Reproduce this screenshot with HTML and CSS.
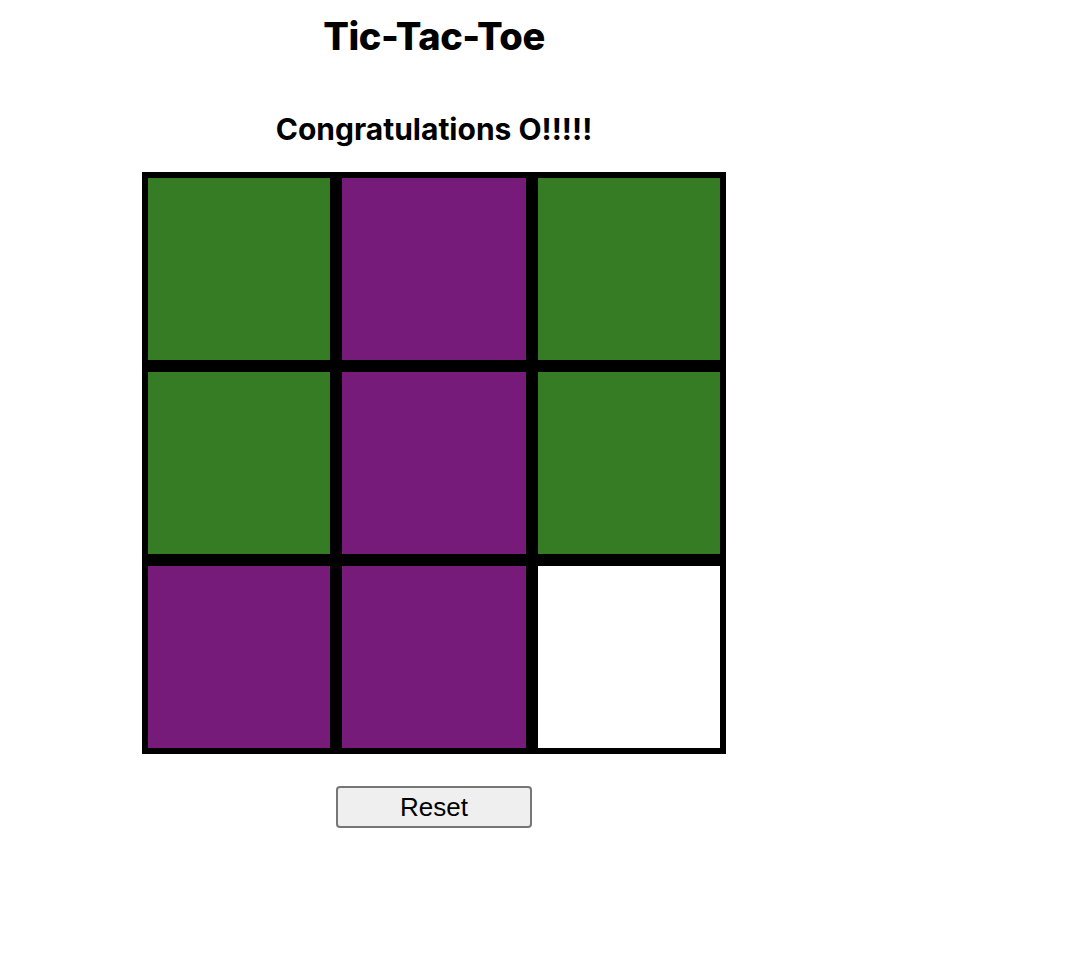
FILE: index.html
```html
<!DOCTYPE html>
<html>
<head>
<meta charset="utf-8">
<link rel="stylesheet" href="styles.css">
</head>
<body>
<div class="game">
  <h1 class="title">Tic-Tac-Toe</h1>
  <h2 class="status">Congratulations O!!!!!</h2>
  <div class="board">
    <div class="cell x"></div>
    <div class="cell o"></div>
    <div class="cell x"></div>
    <div class="cell x"></div>
    <div class="cell o"></div>
    <div class="cell x"></div>
    <div class="cell o"></div>
    <div class="cell o"></div>
    <div class="cell empty"></div>
  </div>
  <div class="controls">
    <button class="reset">Reset</button>
  </div>
</div>
</body>
</html>
```
FILE: styles.css
```css
html, body {
  margin: 0;
  padding: 0;
  background: #ffffff;
}
body {
  padding: 8px;
  font-family: Inter, "Liberation Sans", sans-serif;
  color: #000;
}
.game {
  width: 584px;
  margin-left: 134px;
  display: flex;
  flex-direction: column;
  align-items: center;
}
.title {
  margin: 6px 0 0 0;
  font-size: 38px;
  font-weight: 800;
  line-height: 44px;
  letter-spacing: -0.4px;
}
.status {
  margin: 53px 0 0 0;
  font-size: 30px;
  font-weight: 700;
  line-height: 36px;
  letter-spacing: 0;
}
.board {
  margin-top: 25px;
  align-self: stretch;
  display: grid;
  grid-template-columns: 182px 184px 182px;
  grid-template-rows: 182px 182px 182px;
  gap: 12px;
  border: 6px solid #000;
  background: #000;
}
.cell.x { background: #357c24; }
.cell.o { background: #761b79; }
.cell.empty { background: #ffffff; }
.controls {
  margin-top: 32px;
}
.reset {
  width: 196px;
  height: 42px;
  font-family: "Liberation Sans", Arial, sans-serif;
  font-size: 26px;
  color: #000;
  background: #efefef;
  border: 2px solid #767676;
  border-radius: 4px;
  padding: 0;
}
```
